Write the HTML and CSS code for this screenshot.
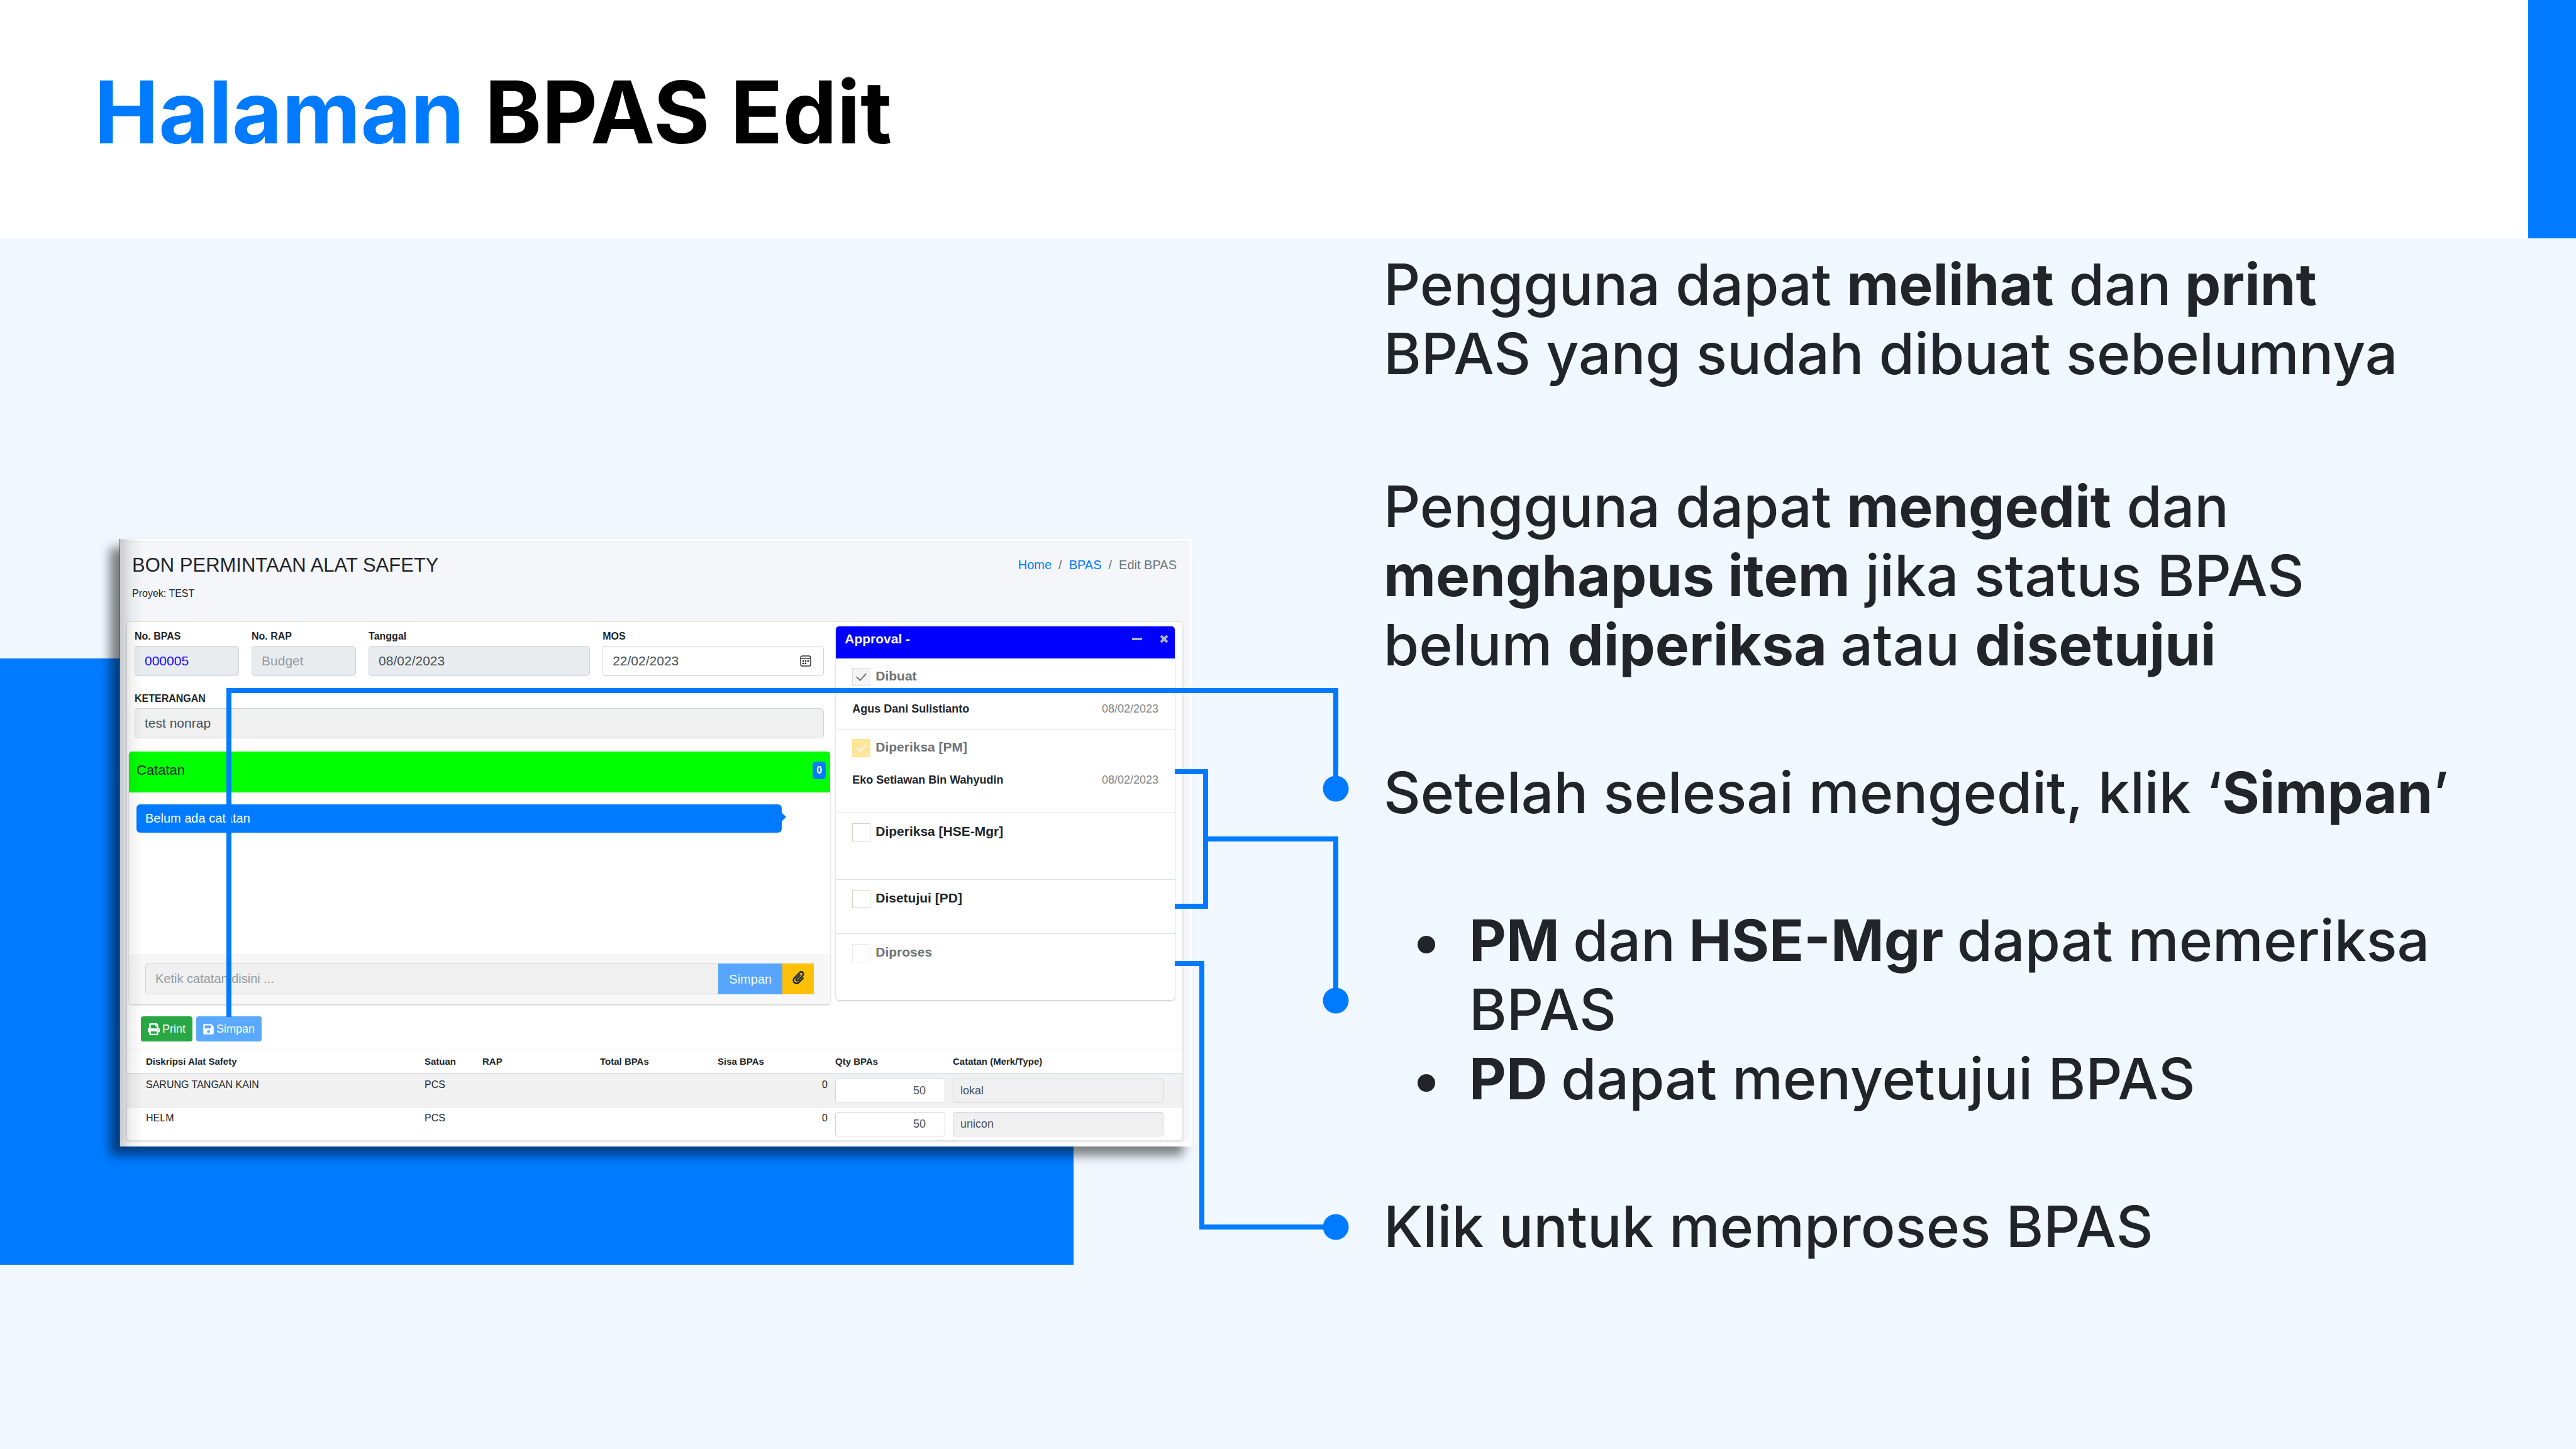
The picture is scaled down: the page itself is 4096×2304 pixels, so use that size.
FILE: index.html
```html
<!DOCTYPE html>
<html lang="id">
<head>
<meta charset="utf-8">
<title>Halaman BPAS Edit</title>
<link rel="stylesheet" href="styles.css">
</head>
<body>
<header class="top">
  <h1 class="title"><span class="title-accent">Halaman</span> BPAS Edit</h1>
  <div class="top-bar"></div>
</header>
<main class="stage">
  <div class="backdrop"></div>
  <section class="shot">
    <div class="app">
      <div class="app-head">
        <div>
          <h2 class="app-title">BON PERMINTAAN ALAT SAFETY</h2>
          <p class="project">Proyek: TEST</p>
        </div>
        <nav class="crumbs">
          <a href="#home">Home</a><span>/</span><a href="#bpas">BPAS</a><span>/</span><span>Edit BPAS</span>
        </nav>
      </div>
      <div class="card">
        <div class="columns">
          <div class="left">
            <form class="fields">
              <div class="group">
                <label for="no-bpas">No. BPAS</label>
                <div class="field locked"><input class="input number" id="no-bpas" type="text" value="000005" readonly></div>
              </div>
              <div class="group">
                <label for="no-rap">No. RAP</label>
                <div class="field locked"><input class="input" id="no-rap" type="text" placeholder="Budget" readonly></div>
              </div>
              <div class="group wide">
                <label for="tanggal">Tanggal</label>
                <div class="field locked"><input class="input" id="tanggal" type="text" value="08/02/2023" readonly></div>
              </div>
              <div class="group wide">
                <label for="mos">MOS</label>
                <div class="field">
                  <input class="input" id="mos" type="text" value="22/02/2023">
                  <svg class="calendar" viewBox="0 0 18 18" aria-hidden="true"><rect x="1" y="1" width="16" height="16" rx="3" fill="none" stroke="#333" stroke-width="1.5"/><path d="M1 4.8h16" stroke="#333" stroke-width="1.5"/><path d="M4 8h2.4v2.2H4zM7.8 8h2.4v2.2H7.8zM11.6 8H14v2.2h-2.4zM4 11.8h2.4V14H4zM7.8 11.8h2.4V14H7.8z" fill="#222"/></svg>
                </div>
              </div>
              <div class="group full">
                <label for="keterangan">KETERANGAN</label>
                <div class="field muted"><input class="input" id="keterangan" type="text" value="test nonrap" readonly></div>
              </div>
            </form>
            <section class="notes">
              <div class="notes-head"><h3>Catatan</h3><span class="badge">0</span></div>
              <div class="notes-body"><p class="bubble">Belum ada catatan</p></div>
              <form class="notes-foot">
                <input class="note-input" type="text" placeholder="Ketik catatan disini ..." aria-label="Catatan">
                <button class="note-save" type="button">Simpan</button>
                <button class="note-attach" type="button" aria-label="Lampiran">
                  <svg class="clip" viewBox="0 0 448 512" aria-hidden="true"><path fill="#1f2d3d" d="M43.246 466.142c-58.43-60.289-57.341-157.511 1.386-217.581L254.392 34c44.316-45.332 116.351-45.336 160.671 0 43.89 44.894 43.943 117.329 0 162.276L232.214 383.128c-29.855 30.537-78.633 30.111-107.982-.998-28.275-29.97-27.368-77.473 1.452-106.953l143.743-146.835c6.182-6.314 16.312-6.422 22.626-.241l22.861 22.379c6.315 6.182 6.422 16.312.241 22.626L171.427 319.927c-4.932 5.045-5.236 13.428-.648 18.292 4.372 4.634 11.245 4.711 15.688.165l182.849-186.851c19.613-20.062 19.613-52.725-.011-72.798-19.189-19.627-49.957-19.637-69.154 0L90.39 293.295c-34.763 35.56-35.299 93.12-1.191 128.313 34.01 35.093 88.985 35.137 123.058.286l172.06-175.999c6.177-6.319 16.307-6.433 22.626-.256l22.877 22.364c6.319 6.177 6.434 16.307.256 22.626l-172.06 175.998c-59.576 60.938-155.943 60.216-214.77-.485z"/></svg>
                </button>
              </form>
            </section>
            <div class="actions">
              <button class="btn btn-print" type="button"><svg class="icon-print" viewBox="0 0 512 512" aria-hidden="true"><path fill="#fff" d="M448 192V77.25c0-8.49-3.37-16.62-9.37-22.63L393.37 9.37c-6-6-14.14-9.37-22.63-9.37H96C78.33 0 64 14.33 64 32v160c-35.35 0-64 28.65-64 64v112c0 8.84 7.16 16 16 16h48v96c0 17.67 14.33 32 32 32h320c17.67 0 32-14.33 32-32v-96h48c8.84 0 16-7.16 16-16V256c0-35.35-28.65-64-64-64zm-64 256H128v-96h256v96zm0-224H128V64h192v48c0 8.84 7.16 16 16 16h48v96zm48 72c-13.25 0-24-10.75-24-24 0-13.26 10.75-24 24-24s24 10.74 24 24c0 13.25-10.75 24-24 24z"/></svg>Print</button>
              <button class="btn btn-save" type="button"><svg class="icon-save" viewBox="0 0 448 512" aria-hidden="true"><path fill="#fff" d="M433.941 129.941l-83.882-83.882A48 48 0 0 0 316.118 32H48C21.49 32 0 53.49 0 80v352c0 26.51 21.49 48 48 48h352c26.51 0 48-21.49 48-48V163.882a48 48 0 0 0-14.059-33.941zM224 416c-35.346 0-64-28.654-64-64 0-35.346 28.654-64 64-64s64 28.654 64 64c0 35.346-28.654 64-64 64zm96-304.52V212c0 6.627-5.373 12-12 12H76c-6.627 0-12-5.373-12-12V108c0-6.627 5.373-12 12-12h228.52c3.183 0 6.235 1.264 8.485 3.515l3.48 3.48A11.996 11.996 0 0 1 320 111.48z"/></svg>Simpan</button>
            </div>
          </div>
          <section class="approval">
            <div class="approval-head">
              <h3>Approval -</h3>
              <button class="tool" type="button" aria-label="Ciutkan"><svg viewBox="0 0 16 16" aria-hidden="true"><path d="M0 8h16" stroke="#adb5bd" stroke-width="4"/></svg></button>
              <button class="tool" type="button" aria-label="Tutup"><svg viewBox="0 0 16 16" aria-hidden="true"><path d="M3 3l10 10M13 3L3 13" stroke="#adb5bd" stroke-width="4"/></svg></button>
            </div>
            <ul class="steps">
              <li class="step">
                <div class="check"><input class="box" id="dibuat" type="checkbox" checked disabled><label for="dibuat">Dibuat</label></div>
                <div class="signer"><span>Agus Dani Sulistianto</span><time>08/02/2023</time></div>
              </li>
              <li class="step">
                <div class="check"><input class="box warm" id="pm" type="checkbox" checked disabled><label for="pm">Diperiksa [PM]</label></div>
                <div class="signer"><span>Eko Setiawan Bin Wahyudin</span><time>08/02/2023</time></div>
              </li>
              <li class="step open">
                <div class="check"><input class="box" id="hse" type="checkbox"><label for="hse">Diperiksa [HSE-Mgr]</label></div>
              </li>
              <li class="step open">
                <div class="check"><input class="box" id="pd" type="checkbox"><label for="pd">Disetujui [PD]</label></div>
              </li>
              <li class="step open">
                <div class="check"><input class="box" id="proses" type="checkbox" disabled><label for="proses">Diproses</label></div>
              </li>
            </ul>
          </section>
        </div>
        <table class="items">
          <thead>
            <tr><th class="c-name">Diskripsi Alat Safety</th><th class="c-unit">Satuan</th><th class="c-num">RAP</th><th class="c-num">Total BPAs</th><th class="c-num">Sisa BPAs</th><th class="c-num">Qty BPAs</th><th class="c-note">Catatan (Merk/Type)</th></tr>
          </thead>
          <tbody>
            <tr><td class="c-name">SARUNG TANGAN KAIN</td><td>PCS</td><td></td><td></td><td class="right">0</td><td><input class="cell-input qty" type="text" value="50" aria-label="Qty BPAs"></td><td class="c-note"><input class="cell-input muted" type="text" value="lokal" aria-label="Catatan" readonly></td></tr>
            <tr><td class="c-name">HELM</td><td>PCS</td><td></td><td></td><td class="right">0</td><td><input class="cell-input qty" type="text" value="50" aria-label="Qty BPAs"></td><td class="c-note"><input class="cell-input muted" type="text" value="unicon" aria-label="Catatan" readonly></td></tr>
          </tbody>
        </table>
      </div>
    </div>
  </section>
  <section class="guide">
    <p class="lead">Pengguna dapat <b>melihat</b> dan<b> print</b> BPAS yang sudah dibuat sebelumnya</p>
    <p>Pengguna dapat <b>mengedit</b> dan <b>menghapus item</b> jika status BPAS belum <b>diperiksa </b>atau <b>disetujui</b></p>
    <p>Setelah selesai mengedit, klik ‘<b>Simpan</b>’</p>
    <ul>
      <li><b>PM </b>dan<b> HSE-Mgr </b>dapat memeriksa BPAS</li>
      <li><b>PD </b>dapat menyetujui BPAS</li>
    </ul>
    <p>Klik untuk memproses BPAS</p>
  </section>
  <svg class="connectors" viewBox="0 0 4096 1925" aria-hidden="true">
    <g fill="none" stroke="#007bff" stroke-width="8">
      <path d="M364 1238V719H2124V875"/>
      <path d="M1868 848H1917V1062H1868M1917 955H2124V1212"/>
      <path d="M1868 1153H1911V1572H2124"/>
    </g>
    <g fill="#007bff">
      <circle cx="2124" cy="875" r="20.5"/>
      <circle cx="2124" cy="1212" r="20.5"/>
      <circle cx="2124" cy="1572" r="20.5"/>
    </g>
  </svg>
</main>
</body>
</html>
```
FILE: styles.css
```css
* { box-sizing: border-box; }

body {
  margin: 0;
  min-height: 100vh;
  display: flex;
  flex-direction: column;
  background: #f1f8ff;
  color: #212529;
  font-family: "Liberation Sans", Arial, sans-serif;
}

h1, h2, h3, p, ul { margin: 0; padding: 0; }

/* Title band */
.top {
  display: flex;
  justify-content: space-between;
  background: #fff;
}
.title {
  padding: 95px 0 118px 150px;
  font: 700 137px/166px Inter, sans-serif;
  color: #000;
}
.title-accent { color: #007bff; }
.top-bar { width: 76px; background: #007bff; }

/* Stage */
.stage {
  position: relative;
  isolation: isolate;
  flex: 1;
  display: grid;
  grid-template-columns: minmax(0, 1fr) minmax(0, 1fr);
  column-gap: 304px;
  align-items: start;
  padding: 0 190px;
}
.backdrop {
  position: absolute;
  z-index: -1;
  left: 0;
  top: 668px;
  width: calc(50% - 341px);
  height: 964px;
  background: #007bff;
}
.connectors {
  position: absolute;
  left: 0;
  top: 0;
  width: 100%;
  pointer-events: none;
}

/* Guide text */
.guide {
  padding-top: 18px;
  font: 500 91px/110px Inter, sans-serif;
}
.guide > * + * { margin-top: 125px; }
.guide > .lead + p { margin-top: 133px; }
.guide b { font-weight: 700; }
.guide ul { padding-left: 136px; list-style: none; }
.guide li::before {
  content: "";
  display: inline-block;
  width: 28px;
  height: 28px;
  margin: 0 54px 0 -82px;
  border-radius: 50%;
  background: #212529;
  vertical-align: 12px;
}

/* Application window */
.shot {
  position: relative;
  margin-top: 478px;
  padding: 3px 5px 9px 0;
  border-left: 1px solid #55585c;
  background: #fcfcfd;
  box-shadow: -15px 14px 16px rgba(0, 0, 0, .5);
}
.shot::after {
  content: "";
  position: absolute;
  inset: 0 auto 0 0;
  width: 36px;
  background: linear-gradient(90deg, rgba(0, 0, 0, .18), rgba(0, 0, 0, .05) 50%, transparent);
  pointer-events: none;
}
.app {
  padding: 20px 10px 0;
  border-top: 1px solid #e3e7ea;
  background: #f4f6f9;
}
.app-head {
  display: flex;
  justify-content: space-between;
  padding: 0 10px 34px 9px;
}
.app-title { font-size: 31px; line-height: 36px; font-weight: 400; }
.project { margin-top: 17px; font-size: 16px; line-height: 20px; }
.crumbs {
  display: flex;
  gap: 11px;
  padding-top: 5px;
  font-size: 20px;
  line-height: 24px;
  color: #6c757d;
}
.crumbs a { color: #007bff; text-decoration: none; }

.card {
  border: 1px solid #dfe3e6;
  border-radius: 5px;
  background: #fff;
  box-shadow: 0 1px 3px rgba(0, 0, 0, .15);
  overflow: hidden;
}
.columns {
  display: grid;
  grid-template-columns: minmax(0, 207fr) minmax(0, 100fr);
  column-gap: 9px;
  align-items: start;
  padding: 0 12px 0 3px;
}

/* Form */
.fields {
  display: grid;
  grid-template-columns: repeat(12, minmax(0, 1fr));
  gap: 26px 20px;
  padding: 13px 10px 21px 9px;
}
.group {
  grid-column: span 2;
  display: grid;
  grid-template-columns: minmax(0, 1fr);
  gap: 5px;
}
.group.wide { grid-column: span 4; }
.group.full { grid-column: span 12; }
.group label { font-size: 16px; line-height: 20px; font-weight: 700; }
.field {
  display: flex;
  align-items: center;
  height: 48px;
  padding: 0 19px 0 15px;
  border: 1px solid #ced4da;
  border-radius: 5px;
  background: #fff;
}
.field.locked { background: #e9ecef; }
.field.muted, .cell-input.muted { background: #f0f0f0; }
.input {
  flex: 1;
  min-width: 0;
  height: 24px;
  padding: 0;
  border: 0;
  background: none;
  font: 21px/24px "Liberation Sans", Arial, sans-serif;
  color: #495057;
}
.input.number { color: #1a0dff; }
.input::placeholder, .note-input::placeholder { color: #939ba2; opacity: 1; }
.calendar { width: 18px; height: 18px; }

/* Notes */
.notes {
  border-radius: 5px;
  box-shadow: 0 1px 3px rgba(0, 0, 0, .25);
  overflow: hidden;
}
.notes-head {
  display: flex;
  justify-content: space-between;
  align-items: center;
  height: 65px;
  padding: 0 7px 4px 12px;
  border-bottom: 1px solid #00d800;
  background: #0f0;
}
.notes-head h3 { font-size: 22px; line-height: 26px; font-weight: 400; }
.badge {
  padding: 4px 6px;
  border-radius: 5px;
  background: #007bff;
  color: #fff;
  font-size: 16px;
  line-height: 20px;
  font-weight: 700;
}
.notes-body { min-height: 257px; padding: 19px 77px 0 12px; }
.bubble {
  position: relative;
  padding: 10px 14px 11px;
  border-radius: 6px;
  background: #007bff;
  color: #fff;
  font-size: 20px;
  line-height: 24px;
}
.bubble::after {
  content: "";
  position: absolute;
  left: 100%;
  top: 13px;
  border: 7px solid transparent;
  border-left-color: #007bff;
  border-right-width: 0;
}
.notes-foot { display: flex; padding: 15px 26px 16px; background: #f7f7f7; }
.note-input {
  flex: 1;
  min-width: 0;
  height: 49px;
  padding: 0 15px;
  border: 1px solid #ced4da;
  border-right: 0;
  border-radius: 5px 0 0 5px;
  background: #f0f0f0;
  font: 20px/24px "Liberation Sans", Arial, sans-serif;
}
.note-save, .note-attach {
  padding: 0;
  border: 0;
  font: 20px/24px "Liberation Sans", Arial, sans-serif;
}
.note-save { width: 102px; background: #57a5fc; color: #f2f7fd; }
.note-attach { width: 50px; background: #ffc107; }
.clip { display: block; width: 19px; height: 21px; margin: 0 auto 4px; }

.actions { display: flex; gap: 6px; padding: 19px 0 13px 19px; }
.btn {
  display: flex;
  align-items: center;
  gap: 4px;
  height: 40px;
  padding: 0 11px;
  border: 0;
  border-radius: 4px;
  color: #fff;
  font: 18px/20px "Liberation Sans", Arial, sans-serif;
}
.btn-print { background: #28a745; }
.btn-save { background: #5aa9ff; }
.icon-print { width: 19px; height: 19px; }
.icon-save { width: 17px; height: 19px; }

/* Approval */
.approval {
  margin-top: 7px;
  border-radius: 5px;
  background: #fff;
  box-shadow: 0 1px 3px rgba(0, 0, 0, .25);
  overflow: hidden;
}
.approval-head {
  display: flex;
  align-items: flex-start;
  gap: 27px;
  height: 51px;
  padding: 8px 9px 0 14px;
  background: #00f;
  color: #fff;
}
.approval-head h3 { flex: 1; font-size: 21px; line-height: 24px; }
.tool { width: 16px; height: 24px; padding: 0; border: 0; background: none; }
.tool svg { display: block; width: 16px; height: 16px; }
.steps {
  display: grid;
  grid-template-rows: 112px 133px 106px 86px 106px;
  list-style: none;
}
.step { padding: 15px 26px 0; }
.step.open { padding-top: 16px; }
.step + .step { border-top: 1px solid #e0e3e6; }
.check { display: flex; gap: 8px; }
.check label { font-size: 21px; line-height: 26px; font-weight: 700; }
.box {
  appearance: none;
  display: grid;
  place-items: center;
  width: 29px;
  height: 29px;
  margin: 0;
  border: 1px solid #d2d2c8;
  background: #fff;
}
.box:disabled { border-color: #e9e9e6; }
.box:disabled + label { color: #6f7275; }
.box:checked { border-color: #dcdcdc; background: #f4f4f4; color: #777; }
.box.warm { border-color: #ffe598; background: #ffe598; color: #fff; }
.box:checked::before {
  content: "";
  width: 7px;
  height: 13px;
  margin-bottom: 4px;
  border: solid currentColor;
  border-width: 0 2px 2px 0;
  rotate: 42deg;
}
.signer {
  display: flex;
  justify-content: space-between;
  margin-top: 26px;
  font-size: 18px;
  line-height: 20px;
  font-weight: 700;
}
.signer time { font-weight: 400; color: #7d858c; }

/* Item table */
.items {
  width: 100%;
  table-layout: fixed;
  border-collapse: separate;
  border-spacing: 0;
  border-top: 1px solid #dee2e6;
}
.items th {
  padding: 8px 6px;
  border-bottom: 2px solid #dee2e6;
  font-size: 15px;
  line-height: 20px;
  text-align: left;
}
.items td {
  padding: 7px 6px 6px;
  font-size: 16px;
  line-height: 20px;
  vertical-align: top;
}
.items tbody tr:nth-child(odd) { background: #f1f1f1; }
.items tbody tr + tr td { border-top: 1px solid #dee2e6; }
.items .c-name { padding-left: 30px; }
.items th.c-name { width: 467px; }
.items th.c-unit { width: 92px; }
.items th.c-num { width: 187px; }
.items td.c-note { padding-right: 30px; }
.items .right { text-align: right; }
.cell-input {
  display: block;
  width: 100%;
  height: 39px;
  padding: 0 11px;
  border: 1px solid #ced4da;
  border-radius: 4px;
  font: 18px/20px "Liberation Sans", Arial, sans-serif;
  color: #495057;
}
.cell-input.qty { padding-right: 30px; background: #fff; text-align: right; }
```
